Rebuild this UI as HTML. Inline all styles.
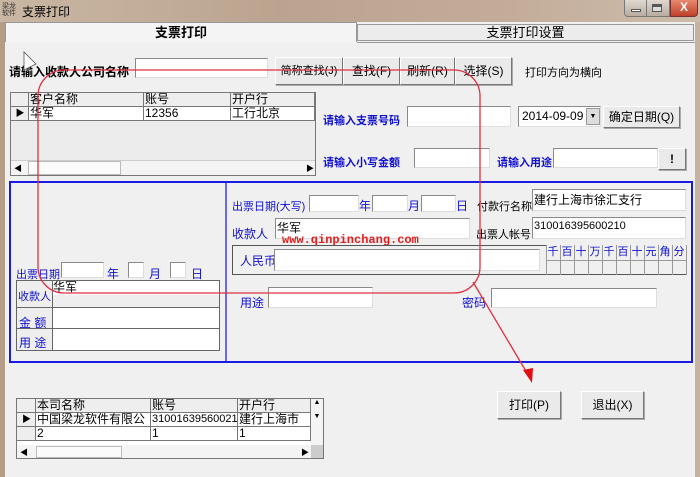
<!DOCTYPE html>
<html><head><meta charset="utf-8"><style>
*{box-sizing:border-box;margin:0;padding:0}
body{width:700px;height:477px;overflow:hidden;background:#f0f0f0;font-family:"Liberation Sans","Noto Sans CJK SC",sans-serif;font-size:12px;position:relative;color:#000}
.a{position:absolute;white-space:nowrap}
.in{position:absolute;background:#fff;border:1px solid #8a8a8a;border-right-color:#ddd;border-bottom-color:#ddd}
.btn{position:absolute;background:#eaeaea;border:1px solid #fff;border-right-color:#777;border-bottom-color:#777;box-shadow:1px 1px 0 #aaa;text-align:center;font-size:12px}
.b{color:#1010d0}
.bb{color:#1010d0;font-weight:bold}
.cell{position:absolute;border-right:1px solid #777;border-bottom:1px solid #777;height:14px;font-size:12px;line-height:13px;padding-left:1px;overflow:hidden}
.d{position:absolute;top:245px;width:14px;height:15px;font-size:11px;line-height:14px;text-align:center;color:#1010d0}
</style></head><body>
<div class="a" style="left:0;top:0;width:700px;height:22px;background:linear-gradient(90deg,#c9b7a3,#bba48f 40%,#c2ab98 70%,#cdbcab)"></div>
<div class="a" style="left:2px;top:3px;font-size:7px;line-height:7px;color:#333">梁龙<br>软件</div>
<div class="a" style="left:22px;top:3px;font-size:12px">支票打印</div>
<div class="a" style="left:624px;top:0;width:46px;height:17px;border:1px solid #777;border-top:none;border-radius:0 0 0 4px;background:linear-gradient(#e0d8d0,#b8aca0)"></div>
<div class="a" style="left:646px;top:0;width:1px;height:17px;background:#777"></div>
<div class="a" style="left:631px;top:9px;width:10px;height:3px;background:#fff;border:1px solid #555"></div>
<div class="a" style="left:652px;top:4px;width:10px;height:8px;border:1px solid #555;border-top:3px solid #555;background:#ddd"></div>
<div class="a" style="left:670px;top:0;width:28px;height:17px;border:1px solid #733;border-top:none;border-radius:0 0 4px 0;background:linear-gradient(#e88a70,#c0402a);color:#fff;font-weight:bold;text-align:center;font-size:12px;line-height:15px">X</div>
<div class="a" style="left:0;top:22px;width:5px;height:455px;background:#b59c87"></div>
<div class="a" style="left:695px;top:22px;width:5px;height:455px;background:#c6b2a0"></div>
<div class="a" style="left:5px;top:22px;width:352px;height:21px;background:#f4f4f4;border:1px solid #999;border-bottom:none;font-weight:bold;text-align:center;font-size:13px;line-height:20px">支票打印</div>
<div class="a" style="left:357px;top:24px;width:337px;height:17px;background:#ececec;border:1px solid #999;text-align:center;font-size:13px;line-height:16px">支票打印设置</div>
<div class="a" style="left:5px;top:42px;width:690px;height:1px;background:#999"></div>
<div class="a" style="left:5px;top:42px;width:352px;height:1px;background:#f4f4f4"></div>
<div class="a" style="left:9px;top:63px;font-weight:bold;font-size:12px">请输入收款人公司名称</div>
<div class="in" style="left:135px;top:58px;width:133px;height:20px"></div>
<div class="btn" style="left:275px;top:57px;width:68px;height:28px;line-height:26px;font-size:11px">简称查找(J)</div>
<div class="btn" style="left:343px;top:57px;width:57px;height:28px;line-height:26px">查找(F)</div>
<div class="btn" style="left:400px;top:57px;width:55px;height:28px;line-height:26px">刷新(R)</div>
<div class="btn" style="left:455px;top:57px;width:57px;height:28px;line-height:26px">选择(S)</div>
<div class="a" style="left:525px;top:64px;font-size:11px">打印方向为横向</div>
<div class="a" style="left:10px;top:92px;width:306px;height:84px;background:#ececec;border:1px solid #777"></div>
<div class="cell" style="left:11px;top:93px;width:18px;background:#eee"></div>
<div class="cell" style="left:29px;top:93px;width:115px;background:#eee">客户名称</div>
<div class="cell" style="left:144px;top:93px;width:87px;background:#eee">账号</div>
<div class="cell" style="left:231px;top:93px;width:84px;background:#eee">开户行</div>
<div class="cell" style="left:11px;top:107px;width:18px;background:#eee;font-size:9px;text-align:center">▶</div>
<div class="cell" style="left:29px;top:107px;width:115px;background:#fff">华军</div>
<div class="cell" style="left:144px;top:107px;width:87px;background:#fff">12356</div>
<div class="cell" style="left:231px;top:107px;width:84px;background:#fff">工行北京</div>
<div class="a" style="left:11px;top:160px;width:304px;height:15px;background:#f4f4f4;border-top:1px solid #ccc"></div>
<div class="a" style="left:14px;top:163px;font-size:8px">◀</div>
<div class="a" style="left:28px;top:161px;width:93px;height:14px;background:#fbfbfb;border:1px solid #bbb"></div>
<div class="a" style="left:306px;top:163px;font-size:8px">▶</div>
<div class="a bb" style="left:323px;top:112px;font-size:11px">请输入支票号码</div>
<div class="in" style="left:407px;top:106px;width:104px;height:21px"></div>
<div class="in" style="left:518px;top:106px;width:83px;height:21px;padding:2px 0 0 3px;font-size:12px">2014-09-09</div>
<div class="a" style="left:586px;top:108px;width:14px;height:17px;background:#ddd;border:1px solid #999;font-size:7px;text-align:center;line-height:16px">▼</div>
<div class="btn" style="left:603px;top:106px;width:77px;height:22px;line-height:20px;font-size:12px">确定日期(Q)</div>
<div class="a bb" style="left:323px;top:154px;font-size:11px">请输入小写金额</div>
<div class="in" style="left:414px;top:148px;width:76px;height:20px"></div>
<div class="a bb" style="left:497px;top:154px;font-size:11px">请输入用途</div>
<div class="in" style="left:553px;top:148px;width:105px;height:20px"></div>
<div class="btn" style="left:658px;top:148px;width:28px;height:22px;line-height:20px;font-weight:bold">!</div>
<div class="a" style="left:9px;top:181px;width:684px;height:182px;border:2px solid #1a1ae0"></div>
<div class="a" style="left:225px;top:183px;width:2px;height:178px;background:#6a6af0"></div>
<div class="a b" style="left:16px;top:266px;font-size:11px">出票日期</div>
<div class="in" style="left:61px;top:262px;width:43px;height:16px"></div>
<div class="a b" style="left:107px;top:265px">年</div>
<div class="in" style="left:128px;top:262px;width:16px;height:16px"></div>
<div class="a b" style="left:149px;top:265px">月</div>
<div class="in" style="left:170px;top:262px;width:16px;height:16px"></div>
<div class="a b" style="left:191px;top:265px">日</div>
<div class="a" style="left:16px;top:280px;width:204px;height:71px;border:1px solid #666;background:#eee"></div>
<div class="a" style="left:52px;top:280px;width:1px;height:71px;background:#666"></div>
<div class="a" style="left:53px;top:281px;width:166px;height:14px;background:#fff;font-size:12px;line-height:13px">华军</div>
<div class="a" style="left:16px;top:307px;width:204px;height:1px;background:#666"></div>
<div class="a" style="left:53px;top:308px;width:166px;height:20px;background:#fff"></div>
<div class="a" style="left:16px;top:328px;width:204px;height:1px;background:#666"></div>
<div class="a" style="left:53px;top:329px;width:166px;height:21px;background:#fff"></div>
<div class="a b" style="left:18px;top:288px;font-size:11px">收款人</div>
<div class="a b" style="left:19px;top:314px">金 额</div>
<div class="a b" style="left:19px;top:334px">用 途</div>
<div class="a b" style="left:232px;top:198px;font-size:11px">出票日期(大写)</div>
<div class="in" style="left:309px;top:195px;width:50px;height:17px"></div>
<div class="a b" style="left:359px;top:197px">年</div>
<div class="in" style="left:372px;top:195px;width:36px;height:17px"></div>
<div class="a b" style="left:408px;top:197px">月</div>
<div class="in" style="left:421px;top:195px;width:35px;height:17px"></div>
<div class="a b" style="left:456px;top:197px">日</div>
<div class="a" style="left:477px;top:198px;font-size:11px">付款行名称</div>
<div class="in" style="left:532px;top:189px;width:154px;height:22px;padding:1px 0 0 1px">建行上海市徐汇支行</div>
<div class="a b" style="left:232px;top:225px">收款人</div>
<div class="in" style="left:275px;top:218px;width:195px;height:21px;padding:0 0 0 1px">华军</div>
<div class="a" style="left:476px;top:226px;font-size:11px">出票人帐号</div>
<div class="in" style="left:532px;top:217px;width:154px;height:22px;padding:2px 0 0 1px;font-size:11px">310016395600210</div>
<div class="a" style="left:282px;top:233px;color:#e02020;font-family:'Liberation Mono',monospace;font-weight:bold;font-size:12px">www.qinpinchang.com</div>
<div class="a" style="left:232px;top:245px;width:315px;height:30px;border:1px solid #555;border-right:none"></div>
<div class="a b" style="left:240px;top:252px">人民币</div>
<div class="in" style="left:274px;top:249px;width:266px;height:22px"></div>
<div class="a" style="left:546px;top:245px;width:140px;height:30px;border-bottom:1px solid #555"></div>
<div class="a" style="left:546px;top:260px;width:140px;height:1px;background:#999"></div>
<div class="d" style="left:546px">千</div><div class="d" style="left:560px">百</div><div class="d" style="left:574px">十</div><div class="d" style="left:588px">万</div><div class="d" style="left:602px">千</div><div class="d" style="left:616px">百</div><div class="d" style="left:630px">十</div><div class="d" style="left:644px">元</div><div class="d" style="left:658px">角</div><div class="d" style="left:672px">分</div>
<div class="a" style="left:546px;top:245px;width:141px;height:30px;background:repeating-linear-gradient(90deg,#999 0 1px,transparent 1px 14px)"></div>
<div class="a b" style="left:240px;top:294px">用途</div>
<div class="in" style="left:268px;top:287px;width:105px;height:21px"></div>
<div class="a b" style="left:462px;top:294px">密码</div>
<div class="in" style="left:491px;top:288px;width:166px;height:20px"></div>
<div class="a" style="left:16px;top:398px;width:308px;height:61px;background:#ececec;border:1px solid #777"></div>
<div class="cell" style="left:17px;top:399px;width:19px;background:#eee"></div>
<div class="cell" style="left:36px;top:399px;width:115px;background:#eee">本司名称</div>
<div class="cell" style="left:151px;top:399px;width:87px;background:#eee">账号</div>
<div class="cell" style="left:238px;top:399px;width:73px;background:#eee">开户行</div>
<div class="cell" style="left:17px;top:413px;width:19px;background:#eee;font-size:9px;text-align:center">▶</div>
<div class="cell" style="left:36px;top:413px;width:115px;background:#fff">中国梁龙软件有限公司</div>
<div class="cell" style="left:151px;top:413px;width:87px;background:#fff;font-size:11px">310016395600210</div>
<div class="cell" style="left:238px;top:413px;width:73px;background:#fff">建行上海市徐汇</div>
<div class="cell" style="left:17px;top:427px;width:19px;background:#eee"></div>
<div class="cell" style="left:36px;top:427px;width:115px;background:#fff">2</div>
<div class="cell" style="left:151px;top:427px;width:87px;background:#fff">1</div>
<div class="cell" style="left:238px;top:427px;width:73px;background:#fff">1</div>
<div class="a" style="left:17px;top:441px;width:294px;height:4px;background:#fff"></div>
<div class="a" style="left:311px;top:399px;width:12px;height:46px;background:#f4f4f4;font-size:7px;text-align:center">▲<br><br>▼</div>
<div class="a" style="left:17px;top:445px;width:294px;height:13px;background:#f4f4f4"></div>
<div class="a" style="left:20px;top:447px;font-size:8px">◀</div>
<div class="a" style="left:36px;top:446px;width:86px;height:12px;background:#fbfbfb;border:1px solid #bbb"></div>
<div class="a" style="left:301px;top:447px;font-size:8px">▶</div>
<div class="a" style="left:311px;top:445px;width:12px;height:13px;background:#ccc"></div>
<div class="btn" style="left:497px;top:391px;width:64px;height:28px;line-height:26px">打印(P)</div>
<div class="btn" style="left:581px;top:391px;width:63px;height:28px;line-height:26px">退出(X)</div>
<svg class="a" style="left:0;top:0" width="700" height="477">
<rect x="38" y="70" width="442" height="223" rx="26" fill="none" stroke="#e03040" stroke-width="1.3"/>
<line x1="473" y1="282" x2="530" y2="378" stroke="#e03040" stroke-width="1.3"/>
<polygon points="532,383 523,370 533,368" fill="#e01010"/>
<polygon points="24,52 24,70 36,64" fill="#fff" stroke="#555" stroke-width="0.8"/>
</svg>
</body></html>
